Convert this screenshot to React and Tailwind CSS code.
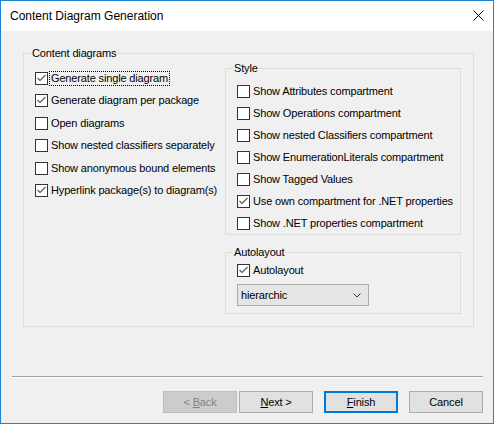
import React from "react";

const FONT = { fontFamily: '"Liberation Sans", Arial, sans-serif' };

function Check({ checked }) {
  return (
    <span className="w-[13px] h-[13px] shrink-0 border border-[#333333] bg-white flex items-center justify-center">
      {checked && (
        <svg width="11" height="11" viewBox="0 0 11 11">
          <polyline points="1.5,5 4,7.5 9.5,2" fill="none" stroke="#555555" strokeWidth="1.1" />
        </svg>
      )}
    </span>
  );
}

function Row({ label, checked, focused }) {
  return (
    <div className="flex items-center h-[13px]">
      <Check checked={checked} />
      <span
        className={`ml-[1px] px-[1px] border leading-[13px] whitespace-nowrap ${
          focused ? "border-dotted border-black" : "border-transparent"
        }`}
      >
        {label}
      </span>
    </div>
  );
}

function Group({ title, className, children }) {
  return (
    <fieldset className={`border border-[#dcdcdc] ${className}`}>
      <legend className="ml-[-4px] px-[1px] leading-[14px]">{title}</legend>
      {children}
    </fieldset>
  );
}

function Button({ children, variant }) {
  const styles = {
    disabled: "bg-[#cccccc] border border-[#bfbfbf] text-[#838383]",
    normal: "bg-[#e1e1e1] border border-[#adadad] text-black",
    default: "bg-[#e1e1e1] border-2 border-[#0078d7] text-black",
  };
  return (
    <button
      type="button"
      className={`w-[74px] h-[22px] flex items-center justify-center text-[11px] ${styles[variant]}`}
    >
      <span className="whitespace-pre">{children}</span>
    </button>
  );
}

const left = [
  ["Generate single diagram", true, true],
  ["Generate diagram per package", true],
  ["Open diagrams", false],
  ["Show nested classifiers separately", false],
  ["Show anonymous bound elements", false],
  ["Hyperlink package(s) to diagram(s)", true],
];

const style = [
  ["Show Attributes compartment", false],
  ["Show Operations compartment", false],
  ["Show nested Classifiers compartment", false],
  ["Show EnumerationLiterals compartment", false],
  ["Show Tagged Values", false],
  ["Use own compartment for .NET properties", true],
  ["Show .NET properties compartment", false],
];

export default function App() {
  return (
    <div
      className="w-[494px] h-[424px] border border-[#1883d7] bg-[#f0f0f0] flex flex-col text-[11px] tracking-[-0.15px] text-black"
      style={FONT}
    >
      <div className="h-[30px] bg-white flex items-center justify-between pl-[9px] pr-[9px] tracking-normal">
        <span className="text-[12px]">Content Diagram Generation</span>
        <svg width="11" height="11" viewBox="0 0 11 11" className="mb-[2px]">
          <path d="M0.5 0.5 L10.5 10.5 M10.5 0.5 L0.5 10.5" stroke="#000" strokeWidth="1" />
        </svg>
      </div>

      <div className="flex-1 flex flex-col">
        <Group title="Content diagrams" className="ml-[22px] mr-[19px] mt-[15px] h-[281px] pt-[1px] pl-[11px]">
          <div className="flex">
            <div className="w-[190px] flex flex-col gap-[9.4px] pt-[11px]">
              {left.map(([l, c, f]) => (
                <Row key={l} label={l} checked={c} focused={f} />
              ))}
            </div>
            <div className="w-[236px] flex flex-col">
              <Group title="Style" className="pt-[10px] pl-[11px] pb-[4px]">
                <div className="flex flex-col gap-[9px]">
                  {style.map(([l, c]) => (
                    <Row key={l} label={l} checked={c} />
                  ))}
                </div>
              </Group>
              <Group title="Autolayout" className="mt-[10px] pt-[5px] pl-[11px] pb-[7px]">
                <Row label="Autolayout" checked />
                <div className="mt-[7px] w-[132px] h-[22px] border border-[#acacac] bg-[#e5e5e5] flex items-center justify-between pl-[3px] pr-[7px]">
                  <span>hierarchic</span>
                  <svg width="8" height="5" viewBox="0 0 8 5">
                    <polyline points="0.5,0.5 4,4 7.5,0.5" fill="none" stroke="#333" strokeWidth="1" />
                  </svg>
                </div>
              </Group>
            </div>
          </div>
        </Group>

        <div className="flex-1" />

        <div className="ml-[11px] mr-[10px] h-[2px] border-t border-[#a0a0a0] border-b border-b-white" />

        <div className="mt-[13px] mb-[10px] mr-[10px] flex justify-end">
          <Button variant="disabled">
            {"< "}<u>B</u>ack
          </Button>
          <div className="ml-[2px]">
            <Button variant="normal">
              <u>N</u>{"ext >"}
            </Button>
          </div>
          <div className="ml-[11px]">
            <Button variant="default">
              <u>F</u>inish
            </Button>
          </div>
          <div className="ml-[11px]">
            <Button variant="normal">Cancel</Button>
          </div>
        </div>
      </div>
    </div>
  );
}
